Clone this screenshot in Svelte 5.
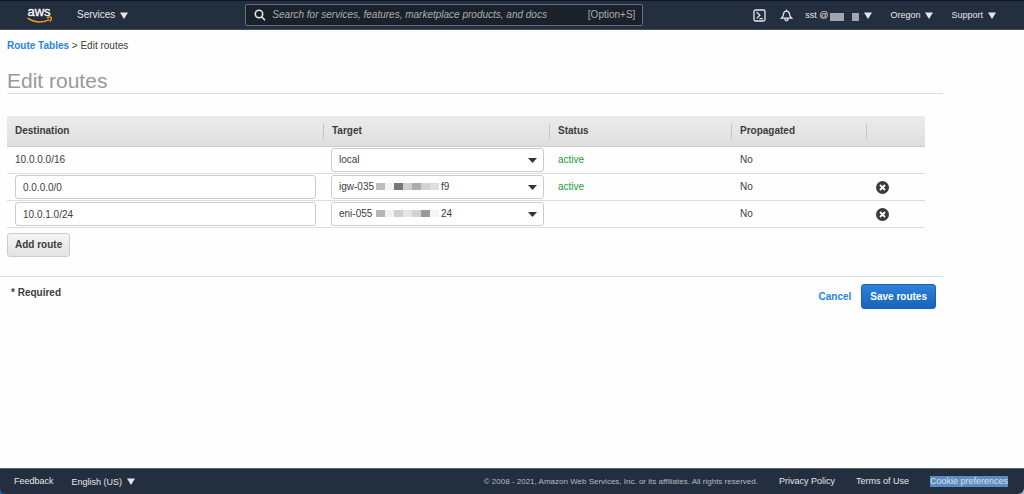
<script>
  let routes = $state([
    { id: 1, destination: '10.0.0.0/16', target: 'local', status: 'active', propagated: 'No', fixed: true },
    { id: 2, destination: '0.0.0.0/0', target: 'igw-035', tail: 'f9', mask: ['#bdbdbd', '#f4f4f4', '#777', '#cfcfcf', '#adadad', '#d2d2d2', '#dedede'], status: 'active', propagated: 'No' },
    { id: 3, destination: '10.0.1.0/24', target: 'eni-055', tail: '24', mask: ['#b5b5b5', '#f1f1f1', '#cfcfcf', '#e6e6e6', '#d2d2d2', '#999', '#f4f4f4'], status: '', propagated: 'No' }
  ])
  let nextId = 4

  function addRoute() {
    routes.push({ id: nextId++, destination: '', target: 'local', status: '', propagated: 'No' })
  }

  function removeRoute(id) {
    routes = routes.filter(r => r.id !== id)
  }
</script>

<svelte:head><title>Edit routes</title></svelte:head>

{#snippet caret()}
  <svg class="caret" width="8" height="7" viewBox="0 0 8 7" aria-hidden="true"><path d="M0 0.5h8L4 7z" fill="currentColor" /></svg>
{/snippet}

<div class="page">
  <header>
    <a href="#home" class="logo" aria-label="AWS home">
      <svg width="26" height="24" viewBox="0 0 26 24">
        <text x="12" y="13" text-anchor="middle">aws</text>
        <path d="M0.500 15.200c6.500 4.600 15.500 4.800 21.800 1.400" fill="none" stroke="#f29a1f" stroke-width="1.500" />
        <path d="M20 14.800c1.600-.8 3.700-.8 4.300-.3.400.6-.2 2.800-1.500 4" fill="none" stroke="#f29a1f" stroke-width="1.300" />
      </svg>
    </a>
    <button class="services">Services {@render caret()}</button>
    <div class="search">
      <svg width="12" height="12" viewBox="0 0 12 12" fill="none" stroke="#e4e7ea" stroke-width="1.600" aria-hidden="true"><circle cx="5" cy="5" r="3.700" /><path d="M7.700 7.700l3.300 3.500" /></svg>
      <input type="text" aria-label="Search" placeholder="Search for services, features, marketplace products, and docs" />
      <span>[Option+S]</span>
    </div>
    <nav>
      <button class="icon" aria-label="CloudShell">
        <svg width="13" height="13" viewBox="0 0 13 13" fill="none" stroke="currentColor" stroke-width="1.300"><rect x="1" y="1" width="11" height="11" rx="1.500" /><path d="M3.700 3.200l3.200 3.100-3.200 3.100M6.500 9.600h3.300" /></svg>
      </button>
      <button class="icon bell" aria-label="Notifications">
        <svg width="13" height="13" viewBox="0 0 13 13" fill="none" stroke="currentColor" stroke-width="1.300"><path d="M1.300 9.200c1.700-1.200 2-2.200 2.200-4 .2-1.900 1.500-3 3-3s2.800 1.100 3 3c.2 1.800.5 2.800 2.200 4zM6.500 2.200V.6M5 9.500c0 2.900 3 2.900 3 0" /></svg>
      </button>
      <button class="account">sst @<i class="wide"></i><i></i>{@render caret()}</button>
      <button class="region">Oregon {@render caret()}</button>
      <button>Support {@render caret()}</button>
    </nav>
  </header>

  <main>
    <div class="crumbs"><a href="#route-tables">Route Tables</a> &gt; Edit routes</div>
    <h1>Edit routes</h1>

    <table>
      <colgroup>
        <col />
        <col class="c-target" />
        <col class="c-status" />
        <col class="c-prop" />
        <col class="c-remove" />
      </colgroup>
      <thead>
        <tr>
          <th>Destination</th>
          <th>Target</th>
          <th>Status</th>
          <th>Propagated</th>
          <th aria-label="Remove"></th>
        </tr>
      </thead>
      <tbody>
        {#each routes as route (route.id)}
          <tr>
            <td>
              {#if route.fixed}
                {route.destination}
              {:else}
                <input type="text" aria-label="Destination" bind:value={route.destination} />
              {/if}
            </td>
            <td>
              <div class="select">
                <select aria-label="Target for {route.destination}">
                  <option>{route.target}</option>
                </select>
                {#if route.mask}
                  <span class="mask">
                    {#each route.mask as shade}<i style="background: {shade}"></i>{/each}<span>{route.tail}</span>
                  </span>
                {/if}
                <svg class="arrow" width="9" height="5" viewBox="0 0 9 5" aria-hidden="true"><path d="M0 0h9L4.500 5z" fill="#333" /></svg>
              </div>
            </td>
            <td class="status">{route.status}</td>
            <td>{route.propagated}</td>
            <td>
              {#if !route.fixed}
                <button class="remove" aria-label="Remove route" onclick={() => removeRoute(route.id)}>
                  <svg width="13" height="13" viewBox="0 0 13 13"><circle cx="6.500" cy="6.500" r="6.500" fill="#3b3b3b" /><path d="M4 4l5 5M9 4L4 9" stroke="#fff" stroke-width="1.800" /></svg>
                </button>
              {/if}
            </td>
          </tr>
        {/each}
      </tbody>
    </table>

    <button class="add" onclick={addRoute}>Add route</button>

    <div class="actions">
      <strong>* Required</strong>
      <a href="#cancel">Cancel</a>
      <button class="save">Save routes</button>
    </div>
  </main>

  <div class="footer-wrap">
    <footer>
      <a href="#feedback">Feedback</a>
      <button>English (US) {@render caret()}</button>
      <small>© 2008 - 2021, Amazon Web Services, Inc. or its affiliates. All rights reserved.</small>
      <a href="#privacy">Privacy Policy</a>
      <a href="#terms">Terms of Use</a>
      <a href="#cookies" class="selected">Cookie preferences</a>
    </footer>
  </div>
</div>

<style>
  :global(body) { margin: 0; background: #fefefe; }
  .page { display: flex; flex-direction: column; min-height: 100vh; font-family: "Liberation Sans", Arial, sans-serif; font-size: 10px; line-height: 14px; color: #3c3c3c; }
  button, input, select { font: inherit; color: inherit; box-sizing: border-box; margin: 0; }
  button { background: none; border: none; padding: 0; cursor: pointer; white-space: nowrap; }
  a { color: #2583e8; text-decoration: none; }
  svg { display: block; }

  header { display: flex; align-items: center; box-sizing: border-box; height: 30px; padding: 0 28px 0 27px; background: #232f3e; border-top: 1px solid #0a1424; border-bottom: 1px solid #47515d; color: #e4e7ea; }
  header button { display: flex; align-items: center; gap: 5px; }
  .logo text { font-size: 13px; fill: #fff; stroke: #fff; stroke-width: 0.3; }
  .services { margin-left: 24px; }
  .search { display: flex; align-items: center; flex: 1; box-sizing: border-box; max-width: 398px; height: 22px; margin-left: 117px; padding: 0 7px 0 8px; background: #1a212b; border: 1px solid #66727a; border-radius: 2px; color: #a7b0b5; }
  .search input { flex: 1; min-width: 0; margin-left: 6px; padding: 0; border: none; outline: none; background: none; }
  .search input::placeholder { color: #a7b0b5; font-style: italic; opacity: 1; }
  nav { display: flex; align-items: center; margin-left: auto; font-size: 9px; }
  .bell { margin-left: 14px; }
  .account { margin-left: 12px; }
  .account i { width: 7px; height: 8px; margin: 3px 0 0 3px; background: #a0a6ae; }
  .account .wide { width: 14px; margin-left: -3px; }
  .region { margin: 0 18px; }

  main { flex: 1; margin-right: 81px; }
  .crumbs { padding: 9px 7px 0; }
  .crumbs a { font-weight: bold; }
  h1 { margin: 16px 0 22px 7px; border-bottom: 1px solid #ddd; color: #999; font-size: 21px; font-weight: normal; line-height: 24px; }

  table { width: calc(100% - 25px); margin-left: 7px; border-collapse: separate; border-spacing: 0; table-layout: fixed; }
  .c-target { width: 226px; }
  .c-status { width: 182px; }
  .c-prop { width: 135px; }
  .c-remove { width: 58px; }
  th, td { box-sizing: border-box; padding: 0 8px; text-align: left; }
  th { height: 31px; background: linear-gradient(#c4c4c4, #c4c4c4) right center / 1px 15px no-repeat, linear-gradient(#ececec, #dedede); border-bottom: 1px solid #ccc; }
  th:last-child { background: linear-gradient(#ececec, #dedede); }
  td { height: 27px; border-bottom: 1px solid #ddd; }
  td input { display: block; width: 100%; height: 24px; padding: 0 7px; border: 1px solid #ccc; border-radius: 3px; background: #fff; }
  .select { position: relative; margin-right: -2px; margin-left: -1px; }
  select { display: block; width: 100%; height: 24px; padding: 0 20px 0 7px; appearance: none; border: 1px solid #ccc; border-radius: 3px; background: #fff; }
  .arrow { position: absolute; top: 10px; right: 7px; pointer-events: none; }
  .mask { position: absolute; top: 5px; left: 45px; display: flex; align-items: center; pointer-events: none; }
  .mask i { width: 9px; height: 7px; margin-top: -2px; }
  .mask span { margin-left: 2px; }
  .status { color: #1a9c35; }
  .remove { display: block; margin-left: 1px; }

  .add { height: 24px; margin: 5px 0 0 7px; padding: 0 7px; border: 1px solid #ccc; border-radius: 3px; background: linear-gradient(#f5f5f5, #e3e3e3); font-weight: bold; }
  .actions { display: flex; align-items: center; margin-top: 19px; padding: 7px 7px 7px 11px; border-top: 1px solid #ddd; font-weight: bold; }
  .actions strong { align-self: flex-start; margin: 2px auto 0 0; }
  .save { height: 25px; margin-left: 10px; padding: 0 8px; border: 1px solid #1a62b5; border-radius: 3px; background: linear-gradient(#2f82d8, #1664ba); color: #fff; font-weight: bold; }

  .footer-wrap { background: linear-gradient(to right, #17629f 50%, #bbb 50%); }
  footer { display: flex; align-items: center; box-sizing: border-box; height: 26px; padding: 0 16px 0 14px; background: #232f3e; border-top: 1px solid #59636e; border-radius: 0 0 6px 6px; color: #e4e7ea; font-size: 9px; white-space: nowrap; }
  footer a { margin-left: 21px; color: #e4e7ea; line-height: 11px; }
  footer a:first-child { margin-left: 0; }
  footer button { display: flex; align-items: center; gap: 5px; margin-left: 18px; }
  footer small { margin-left: auto; color: #b5bbc1; font-size: 8px; }
  footer .selected { background: #5d8cbf; color: #d5e3f1; }
</style>
